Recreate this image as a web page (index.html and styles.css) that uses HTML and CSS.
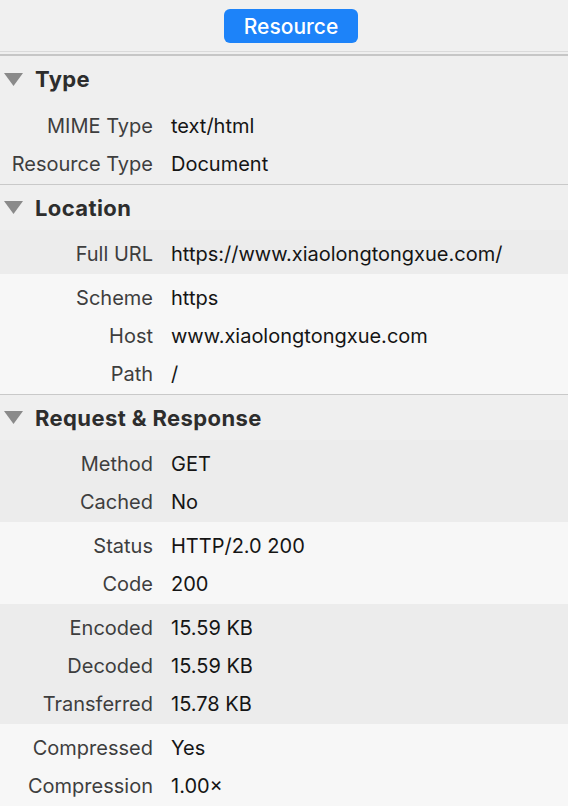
FILE: index.html
```html
<!DOCTYPE html>
<html lang="en">
<head>
<meta charset="utf-8">
<title>Resource</title>
<link rel="stylesheet" href="styles.css">
</head>
<body>
<header class="toolbar">
  <button class="tab">Resource</button>
</header>
<div class="rule"></div>
<main class="details">
  <section class="section">
    <h2 class="section-title"><svg class="disclosure" viewBox="0 0 19 13" width="19" height="13"><polygon points="0,0 19,0 9.5,13"/></svg>Type</h2>
    <div class="group shade">
      <div class="row"><span class="label">MIME Type</span><span class="value">text/html</span></div>
      <div class="row"><span class="label">Resource Type</span><span class="value">Document</span></div>
    </div>
  </section>
  <section class="section">
    <h2 class="section-title"><svg class="disclosure" viewBox="0 0 19 13" width="19" height="13"><polygon points="0,0 19,0 9.5,13"/></svg>Location</h2>
    <div class="group shade">
      <div class="row"><span class="label">Full URL</span><span class="value">https://www.xiaolongtongxue.com/</span></div>
    </div>
    <div class="group light">
      <div class="row"><span class="label">Scheme</span><span class="value">https</span></div>
      <div class="row"><span class="label">Host</span><span class="value">www.xiaolongtongxue.com</span></div>
      <div class="row"><span class="label">Path</span><span class="value">/</span></div>
    </div>
  </section>
  <section class="section">
    <h2 class="section-title"><svg class="disclosure" viewBox="0 0 19 13" width="19" height="13"><polygon points="0,0 19,0 9.5,13"/></svg>Request &amp; Response</h2>
    <div class="group shade">
      <div class="row"><span class="label">Method</span><span class="value">GET</span></div>
      <div class="row"><span class="label">Cached</span><span class="value">No</span></div>
    </div>
    <div class="group light">
      <div class="row"><span class="label">Status</span><span class="value">HTTP/2.0 200</span></div>
      <div class="row"><span class="label">Code</span><span class="value">200</span></div>
    </div>
    <div class="group shade">
      <div class="row"><span class="label">Encoded</span><span class="value">15.59 KB</span></div>
      <div class="row"><span class="label">Decoded</span><span class="value">15.59 KB</span></div>
      <div class="row"><span class="label">Transferred</span><span class="value">15.78 KB</span></div>
    </div>
    <div class="group light">
      <div class="row"><span class="label">Compressed</span><span class="value">Yes</span></div>
      <div class="row"><span class="label">Compression</span><span class="value">1.00×</span></div>
    </div>
  </section>
</main>
</body>
</html>
```
FILE: styles.css
```css
* { box-sizing: border-box; }
html, body {
  margin: 0;
  padding: 0;
  background: #efefef;
  font-family: Inter, "Noto Sans", "Liberation Sans", sans-serif;
  -webkit-font-smoothing: antialiased;
}
body { width: 568px; height: 806px; overflow: hidden; }

.toolbar {
  height: 52px;
  display: flex;
  justify-content: center;
  padding-top: 9px;
  padding-left: 14px;
  background: #f0f0f0;
  border-bottom: 1px solid #dadada;
}
.tab {
  width: 134px;
  height: 34px;
  border: none;
  border-radius: 6px;
  background: #1d83f9;
  color: #ffffff;
  font-family: Inter, "Noto Sans", sans-serif;
  font-size: 21px;
  font-weight: 500;
  padding: 0;
  margin: 0;
}
.rule {
  height: 4px;
  background: #efefef;
  border-bottom: 2px solid #c6c6c6;
}

.section { border-top: 1px solid #c9c9c9; }
.section:first-child { border-top: none; }

.section-title {
  margin: 0;
  height: 45px;
  display: flex;
  align-items: center;
  gap: 12px;
  padding-left: 4px;
  font-size: 22px;
  font-weight: 700;
  letter-spacing: 0.4px;
  color: #2d2d2d;
  background: #efefef;
}
.section:first-child .section-title { height: 46px; }
.disclosure { fill: #8a8a8a; flex: none; }

.group { padding: 5px 0 1px; }
.shade { background: #ececec; }
.light { background: #f7f7f7; }
.section:first-child .shade { background: #efefef; }

.row {
  display: grid;
  grid-template-columns: 153px 1fr;
  column-gap: 18px;
  height: 38px;
  align-items: center;
  font-size: 20px;
}
.label { text-align: right; color: #3e3e3e; }
.value { color: #151515; white-space: nowrap; }
```
